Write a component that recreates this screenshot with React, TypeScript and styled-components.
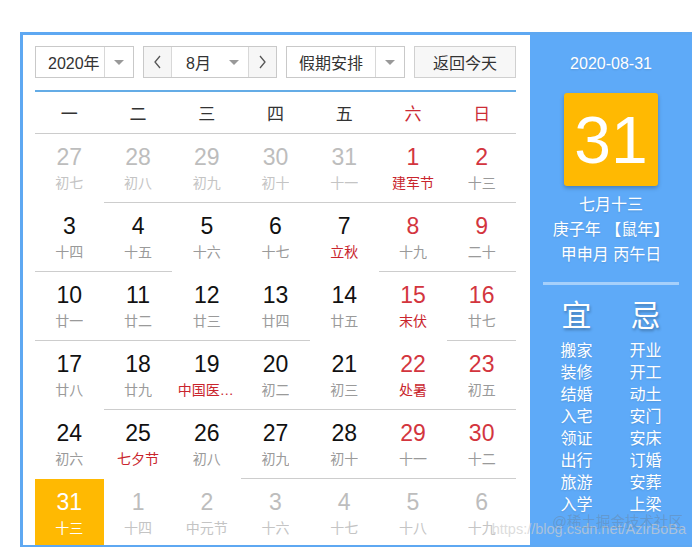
import React from 'react';
import styled, { createGlobalStyle } from 'styled-components';

const GlobalStyle = createGlobalStyle`
  html, body {
    margin: 0;
    padding: 0;
    background: #fff;
  }
  body {
    font-family: 'Liberation Sans', 'Noto Sans CJK SC', sans-serif;
  }
`;

type Day = {
  num: number;
  lunar: string;
  other?: boolean;
  fest?: boolean;
  today?: boolean;
};

const d = (num: number, lunar: string, extra: Partial<Day> = {}): Day => ({ num, lunar, ...extra });

const rows: Day[][] = [
  [
    d(27, '初七', { other: true }),
    d(28, '初八', { other: true }),
    d(29, '初九', { other: true }),
    d(30, '初十', { other: true }),
    d(31, '十一', { other: true }),
    d(1, '建军节', { fest: true }),
    d(2, '十三'),
  ],
  [d(3, '十四'), d(4, '十五'), d(5, '十六'), d(6, '十七'), d(7, '立秋', { fest: true }), d(8, '十九'), d(9, '二十')],
  [d(10, '廿一'), d(11, '廿二'), d(12, '廿三'), d(13, '廿四'), d(14, '廿五'), d(15, '末伏', { fest: true }), d(16, '廿七')],
  [d(17, '廿八'), d(18, '廿九'), d(19, '中国医师节', { fest: true }), d(20, '初二'), d(21, '初三'), d(22, '处暑', { fest: true }), d(23, '初五')],
  [d(24, '初六'), d(25, '七夕节', { fest: true }), d(26, '初八'), d(27, '初九'), d(28, '初十'), d(29, '十一'), d(30, '十二')],
  [
    d(31, '十三', { today: true }),
    d(1, '十四', { other: true }),
    d(2, '中元节', { other: true }),
    d(3, '十六', { other: true }),
    d(4, '十七', { other: true }),
    d(5, '十八', { other: true }),
    d(6, '十九', { other: true }),
  ],
];

// which cells show their bottom rule (as it renders in the original)
const rules = [
  [0, 1, 1, 1, 1, 1, 1],
  [1, 1, 0, 0, 0, 1, 1],
  [1, 1, 1, 1, 0, 0, 1],
  [0, 1, 1, 1, 1, 1, 1],
  [0, 0, 0, 1, 1, 1, 1],
  [0, 0, 0, 0, 0, 0, 0],
];

const weekdays = ['一', '二', '三', '四', '五', '六', '日'];
const good = ['搬家', '装修', '结婚', '入宅', '领证', '出行', '旅游', '入学'];
const bad = ['开业', '开工', '动土', '安门', '安床', '订婚', '安葬', '上梁'];

const Frame = styled.div`
  position: relative;
  display: flex;
  box-sizing: border-box;
  width: 672px;
  height: 515px;
  margin: 32px 0 0 20px;
  border: 3px solid #5ea8f2;
  border-right: none;
  border-bottom-width: 2px;
  overflow: hidden;
`;

const Main = styled.div`
  width: 495px;
  padding: 11px 0 0 12px;
  background: #fff;
  overflow: hidden;
`;

const Toolbar = styled.div`
  display: flex;
  justify-content: space-between;
  width: 481px;
  height: 32px;
`;

const Select = styled.div<{ $w: number; $text: number }>`
  display: grid;
  grid-template-columns: ${(p) => p.$text}px 1fr;
  box-sizing: border-box;
  width: ${(p) => p.$w}px;
  height: 32px;
  border: 1px solid #c9c9c9;
  background: #fff;
  font-size: 16px;
  color: #333;
`;

const SelectText = styled.div`
  display: flex;
  align-items: center;
  padding-left: 12px;
  border-right: 1px solid #d8d8d8;
`;

const Caret = styled.div`
  display: flex;
  align-items: center;
  justify-content: center;
  &::after {
    content: '';
    border-left: 5px solid transparent;
    border-right: 5px solid transparent;
    border-top: 5px solid #999;
  }
`;

const MonthGroup = styled.div`
  display: grid;
  grid-template-columns: 28px 1fr 28px;
  box-sizing: border-box;
  width: 134px;
  height: 32px;
  border: 1px solid #c9c9c9;
  font-size: 16px;
  color: #333;
`;

const Arrow = styled.div<{ $side: 'l' | 'r' }>`
  display: flex;
  align-items: center;
  justify-content: center;
  background: #f6f6f6;
  ${(p) => (p.$side === 'l' ? 'border-right: 1px solid #d8d8d8;' : 'border-left: 1px solid #d8d8d8;')}
  color: #555;
`;

const MonthBox = styled.div`
  display: flex;
  align-items: center;
  justify-content: space-between;
  padding: 0 9px 0 14px;
  background: #fff;
`;

const MiniCaret = styled.span`
  border-left: 5px solid transparent;
  border-right: 5px solid transparent;
  border-top: 5px solid #999;
`;

const TodayButton = styled.div`
  display: flex;
  align-items: center;
  justify-content: center;
  box-sizing: border-box;
  width: 102px;
  height: 32px;
  border: 1px solid #d0d0d0;
  background: #f7f7f7;
  font-size: 16px;
  color: #333;
`;

const Grid = styled.div`
  display: grid;
  grid-template-columns: repeat(7, 1fr);
  width: 481px;
  margin-top: 12px;
  border-top: 2px solid #64ace6;
`;

const Week = styled.div<{ $red?: boolean }>`
  display: flex;
  align-items: center;
  justify-content: center;
  height: 41px;
  border-bottom: 1px solid #ccc;
  font-size: 17px;
  color: ${(p) => (p.$red ? '#cc2c36' : '#333')};
`;

const Cell = styled.div<{ $rule: boolean; $today?: boolean }>`
  display: flex;
  flex-direction: column;
  align-items: center;
  box-sizing: border-box;
  height: 69px;
  padding-top: 10px;
  background: ${(p) => (p.$today ? '#ffb902' : 'transparent')};
  border-bottom: 1px solid ${(p) => (p.$rule ? '#cdcdcd' : 'transparent')};
`;

const Num = styled.div<{ $color: string }>`
  font-size: 23px;
  line-height: 26px;
  color: ${(p) => p.$color};
`;

const Lunar = styled.div<{ $color: string }>`
  max-width: 58px;
  margin-top: 3px;
  overflow: hidden;
  white-space: nowrap;
  text-overflow: ellipsis;
  font-size: 14px;
  line-height: 20px;
  color: ${(p) => p.$color};
`;

const Side = styled.div`
  display: flex;
  flex-direction: column;
  align-items: center;
  flex: 1;
  background: #5eaaf8;
  color: #fff;
  text-shadow: 0 1px 2px rgba(0, 0, 0, 0.12);
`;

const DateLine = styled.div`
  margin-top: 17px;
  font-size: 16px;
  line-height: 24px;
`;

const BigDay = styled.div`
  display: flex;
  align-items: center;
  justify-content: center;
  width: 94px;
  height: 93px;
  margin-top: 17px;
  border-radius: 3px;
  background: #ffb902;
  box-shadow: 0 2px 4px rgba(0, 0, 0, 0.25);
  font-size: 66px;
  text-shadow: none;
`;

const Info = styled.div`
  margin-top: 6px;
  text-align: center;
  font-size: 16px;
  line-height: 25px;
`;

const Rule = styled.div`
  width: 136px;
  height: 3px;
  margin-top: 15px;
  background: rgba(255, 255, 255, 0.45);
`;

const Lists = styled.div`
  display: grid;
  grid-template-columns: 69px 69px;
  margin-top: 13px;
  text-align: center;
`;

const Head = styled.div`
  font-size: 30px;
  line-height: 36px;
  text-shadow: 1px 2px 3px rgba(0, 0, 0, 0.3);
  margin-bottom: 6px;
`;

const Item = styled.div`
  font-size: 16px;
  line-height: 22px;
`;

const Mark = styled.div`
  position: absolute;
  right: 6px;
  bottom: 8px;
  font-size: 14.5px;
  color: rgba(205, 205, 205, 0.7);
  white-space: nowrap;
  pointer-events: none;
`;

const Mark2 = styled(Mark)`
  right: 9px;
  bottom: 14px;
  font-size: 14.5px;
  color: rgba(110, 110, 110, 0.3);
`;

function numColor(day: Day, col: number) {
  if (day.today) return '#fff';
  if (day.other) return '#bdbdbd';
  return col >= 5 ? '#d3353e' : '#111';
}

function lunarColor(day: Day) {
  if (day.today) return '#fff';
  if (day.other) return '#c4c4c4';
  return day.fest ? '#c9252d' : '#9a9a9a';
}

export default function App() {
  return (
    <>
      <GlobalStyle />
      <Frame>
        <Main>
          <Toolbar>
            <Select $w={99} $text={69}>
              <SelectText>2020年</SelectText>
              <Caret />
            </Select>
            <MonthGroup>
              <Arrow $side='l'>
                <svg width='9' height='14' viewBox='0 0 9 14'>
                  <path d='M7 1 L2 7 L7 13' fill='none' stroke='#555' strokeWidth='1.3' />
                </svg>
              </Arrow>
              <MonthBox>
                8月
                <MiniCaret />
              </MonthBox>
              <Arrow $side='r'>
                <svg width='9' height='14' viewBox='0 0 9 14'>
                  <path d='M2 1 L7 7 L2 13' fill='none' stroke='#555' strokeWidth='1.3' />
                </svg>
              </Arrow>
            </MonthGroup>
            <Select $w={119} $text={89}>
              <SelectText>假期安排</SelectText>
              <Caret />
            </Select>
            <TodayButton>返回今天</TodayButton>
          </Toolbar>

          <Grid>
            {weekdays.map((w, i) => (
              <Week key={w} $red={i >= 5}>
                {w}
              </Week>
            ))}
            {rows.map((row, r) =>
              row.map((day, c) => (
                <Cell key={`${r}-${c}`} $rule={!!rules[r][c]} $today={day.today}>
                  <Num $color={numColor(day, c)}>{day.num}</Num>
                  <Lunar $color={lunarColor(day)}>{day.lunar}</Lunar>
                </Cell>
              ))
            )}
          </Grid>
        </Main>

        <Side>
          <DateLine>2020-08-31</DateLine>
          <BigDay>31</BigDay>
          <Info>
            七月十三
            <br />
            庚子年 【鼠年】
            <br />
            甲申月 丙午日
          </Info>
          <Rule />
          <Lists>
            <Head>宜</Head>
            <Head>忌</Head>
            {good.map((g, i) => (
              <React.Fragment key={g}>
                <Item>{g}</Item>
                <Item>{bad[i]}</Item>
              </React.Fragment>
            ))}
          </Lists>
        </Side>

        <Mark>https://blog.csdn.net/AzirBoBa</Mark>
        <Mark2>@稀土掘金技术社区</Mark2>
      </Frame>
    </>
  );
}
